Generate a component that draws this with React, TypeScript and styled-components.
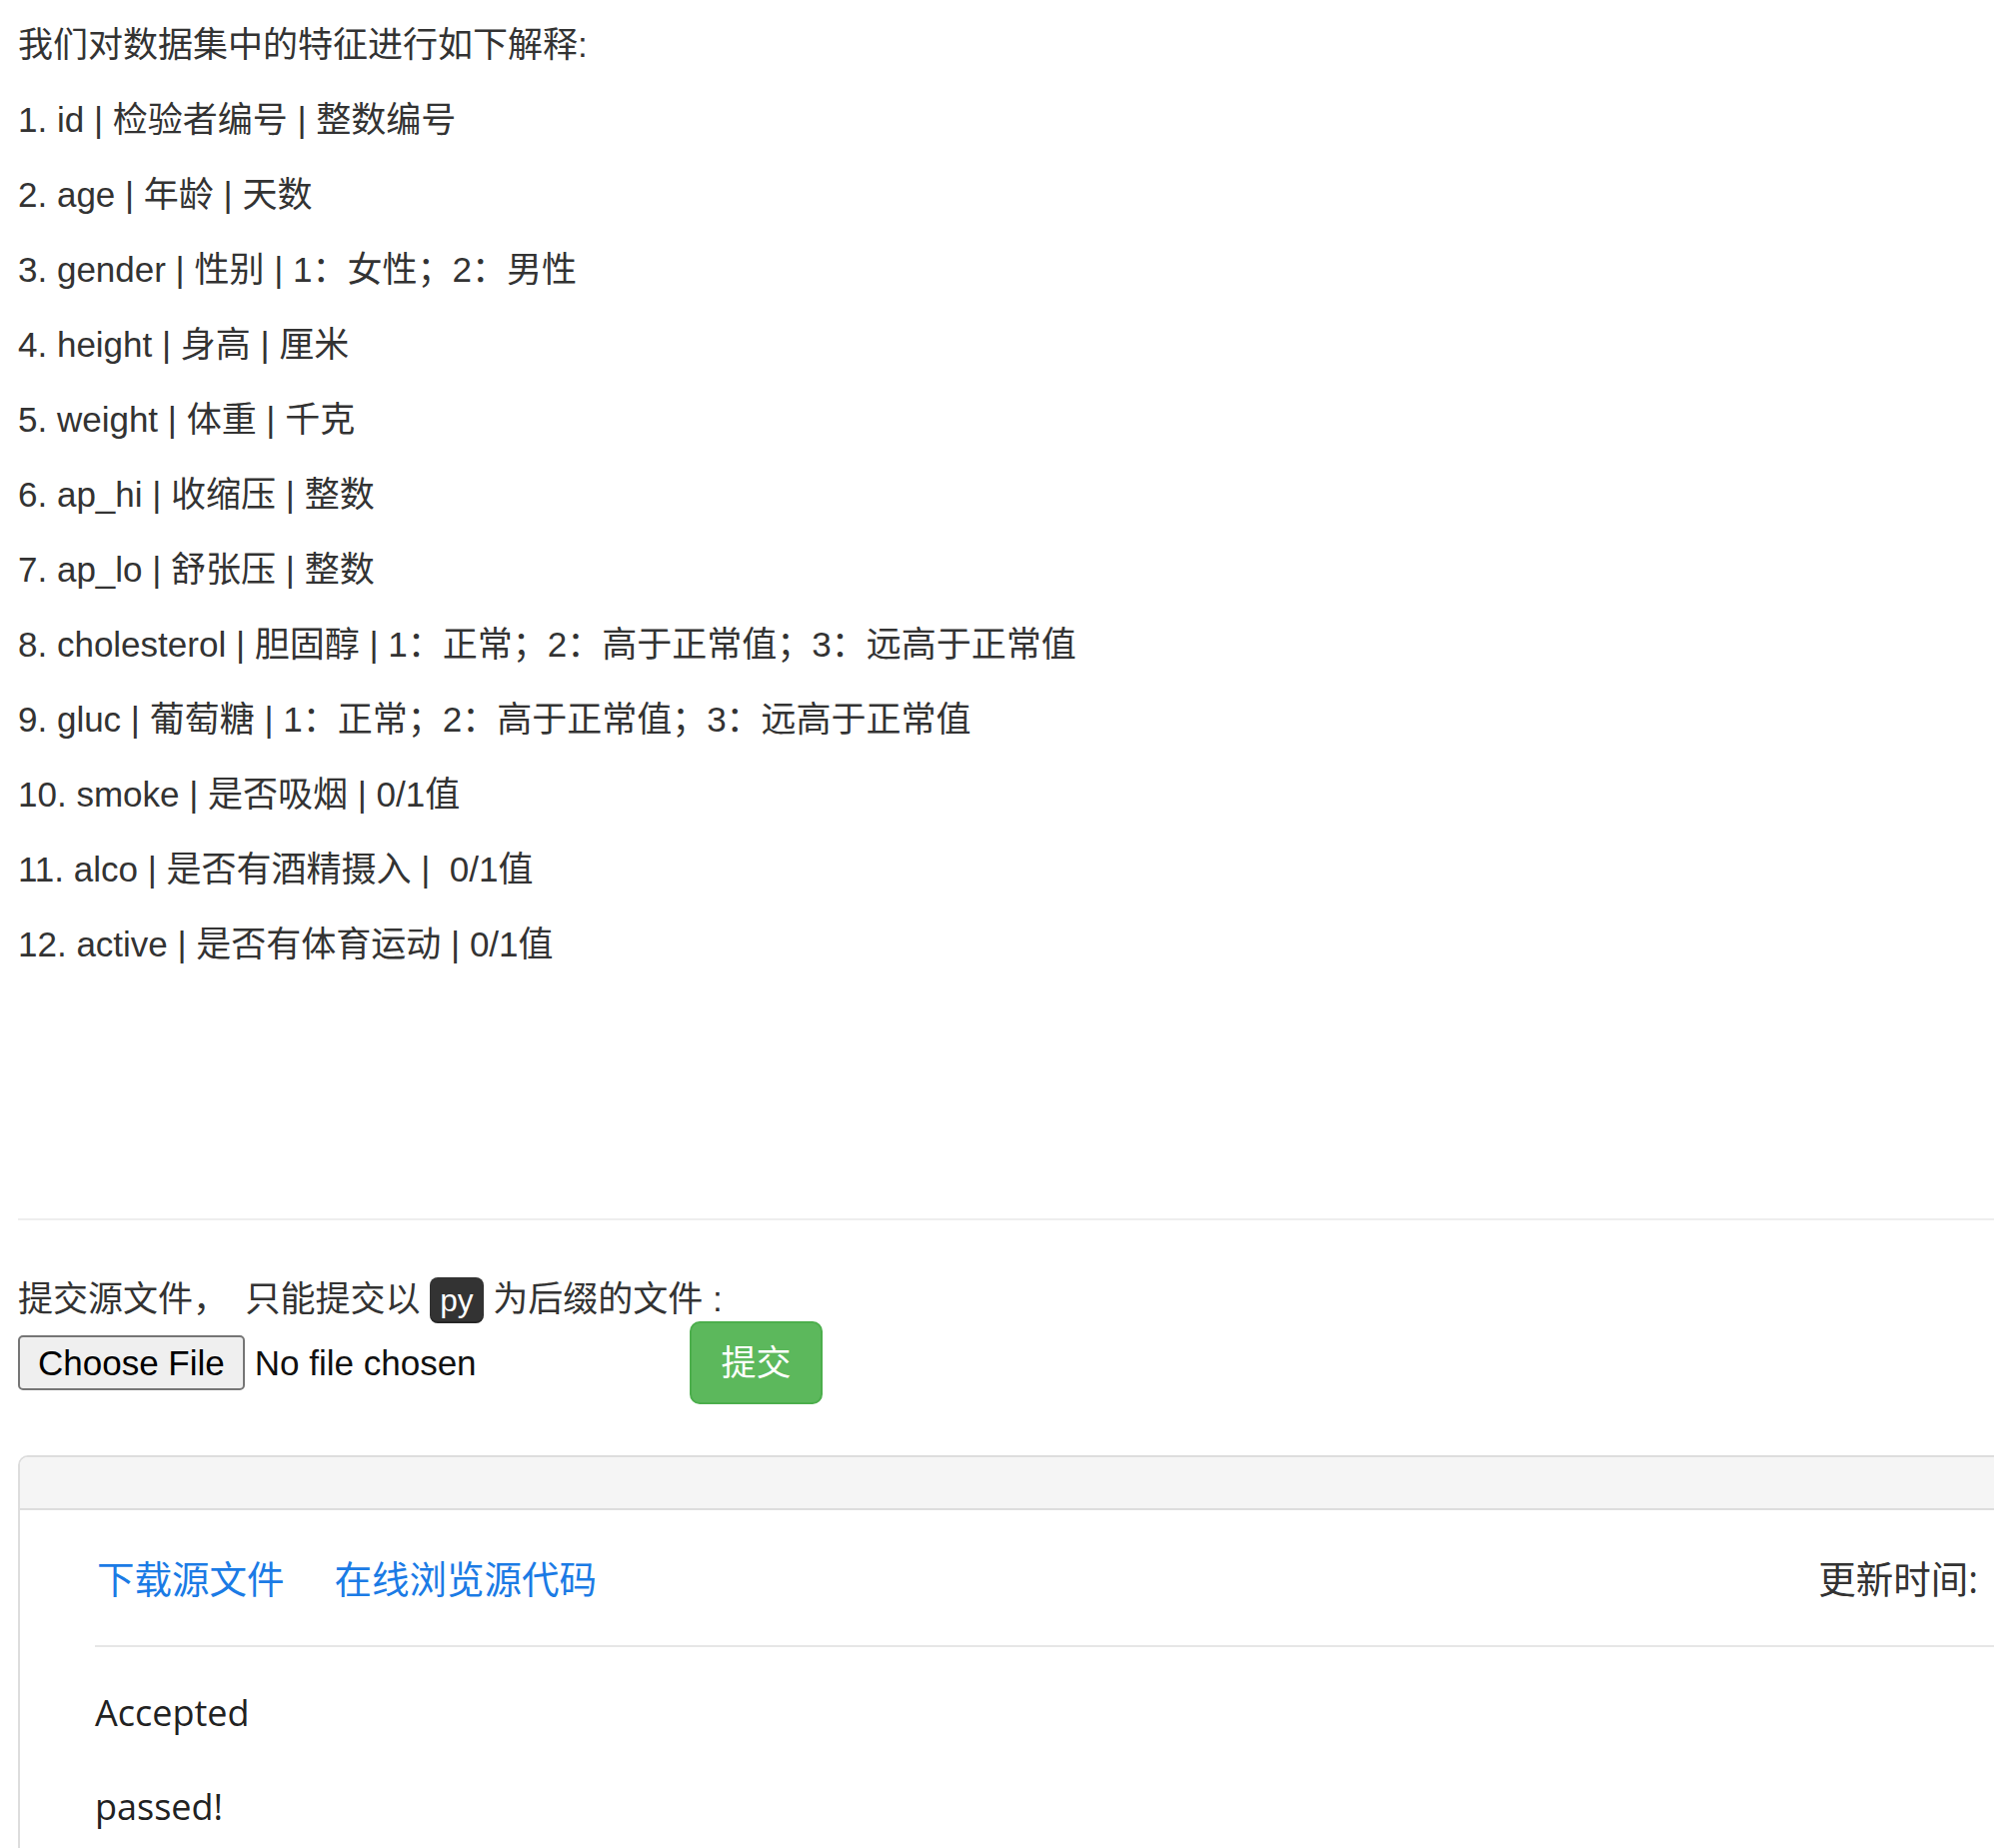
import React from "react"
import styled, { createGlobalStyle } from "styled-components"

const GlobalStyle = createGlobalStyle`
  html, body {
    margin: 0;
    padding: 0;
    background: #fff;
  }
  body {
    font-family: "Liberation Sans", "Noto Sans CJK SC", sans-serif;
    font-size: 35px;
    line-height: 50px;
    color: #333;
  }
  * {
    box-sizing: border-box;
  }
`

const features = [
  "1. id | 检验者编号 | 整数编号",
  "2. age | 年龄 | 天数",
  "3. gender | 性别 | 1：女性；2：男性",
  "4. height | 身高 | 厘米",
  "5. weight | 体重 | 千克",
  "6. ap_hi | 收缩压 | 整数",
  "7. ap_lo | 舒张压 | 整数",
  "8. cholesterol | 胆固醇 | 1：正常；2：高于正常值；3：远高于正常值",
  "9. gluc | 葡萄糖 | 1：正常；2：高于正常值；3：远高于正常值",
  "10. smoke | 是否吸烟 | 0/1值",
  "11. alco | 是否有酒精摄入 | \u00a00/1值",
  "12. active | 是否有体育运动 | 0/1值",
]

const Page = styled.div`
  width: 100vw;
  height: 100vh;
  overflow: hidden;
`

const Container = styled.div`
  width: max-content;
  padding: 20px 0 0 18px;
`

const Description = styled.section`
  padding-bottom: 174px;
`

const Paragraph = styled.p`
  margin: 0 0 25px;
`

const Divider = styled.hr`
  border: 0;
  border-top: 2.5px solid #eee;
  margin: 50px 0;
  width: 2050px;
`

const UploadLabel = styled.div`
  height: 50px;
  padding-top: 4px;
  margin: 0;
`

const Kbd = styled.kbd`
  font-family: "Liberation Sans", sans-serif;
  font-size: 31.5px;
  padding: 5px 10px;
  color: #fff;
  background: #333;
  border-radius: 8px;
  box-shadow: inset 0 -2px 0 rgba(0, 0, 0, 0.25);
`

const UploadRow = styled.form`
  display: flex;
  align-items: center;
  height: 85px;
  margin: 0;
`

const FileInput = styled.label`
  display: flex;
  align-items: center;
  width: 672px;
  font-family: "Liberation Sans", sans-serif;
  font-size: 35px;
  color: #111;
`

const FileButton = styled.span`
  display: inline-flex;
  align-items: center;
  height: 55px;
  padding: 0 18px;
  margin-right: 10px;
  border: 2px solid #767676;
  border-radius: 5px;
  background: #efefef;
  color: #000;
`

const SubmitButton = styled.button`
  font-family: "Liberation Sans", "Noto Sans CJK SC", sans-serif;
  font-size: 35px;
  line-height: 50px;
  padding: 14.5px 29.5px;
  color: #fff;
  background: #5cb85c;
  border: 2px solid #4cae4c;
  border-radius: 10px;
  cursor: pointer;
`

const Panel = styled.div`
  margin-top: 50px;
  width: 2080px;
  border: 2.5px solid #ddd;
  border-radius: 10px;
  background: #fff;
`

const PanelHeading = styled.div`
  height: 52.5px;
  background: #f5f5f5;
  border-bottom: 2.5px solid #ddd;
  border-radius: 8px 8px 0 0;
`

const PanelBody = styled.div`
  padding: 37.5px;
`

const ResultBlock = styled.div`
  padding: 0 37.5px 0 39.5px;
  font-family: "Open Sans", "Noto Sans CJK SC", sans-serif;
`

const LinkRow = styled.div`
  display: flex;
  align-items: center;
  padding: 4.5px 42px 0 0;
  font-size: 37.5px;
  line-height: 54px;
`

const SourceLink = styled.a`
  color: #1b7be5;
  text-decoration: none;
  margin-right: 50px;
`

const UpdateTime = styled.span`
  margin-left: auto;
  color: #333;
`

const InnerDivider = styled.hr`
  border: 0;
  border-top: 2px solid #e6e6e6;
  margin: 39.5px 0 39px -2px;
`

const ResultLine = styled.p`
  margin: 0 0 40px -2px;
  font-size: 36px;
  line-height: 54px;
  color: #222;
`

export default function App() {
  return (
    <Page>
      <GlobalStyle />
      <Container>
        <Description>
          <Paragraph>我们对数据集中的特征进行如下解释:</Paragraph>
          {features.map((f) => (
            <Paragraph key={f}>{f}</Paragraph>
          ))}
        </Description>

        <Divider />

        <UploadLabel>
          提交源文件，{"\u2002"}只能提交以 <Kbd>py</Kbd> 为后缀的文件 :
        </UploadLabel>
        <UploadRow onSubmit={(e) => e.preventDefault()}>
          <FileInput>
            <FileButton>Choose File</FileButton>
            No file chosen
          </FileInput>
          <SubmitButton type="submit">提交</SubmitButton>
        </UploadRow>

        <Panel>
          <PanelHeading />
          <PanelBody>
            <ResultBlock>
              <LinkRow>
                <SourceLink href="#">下载源文件</SourceLink>
                <SourceLink href="#">在线浏览源代码</SourceLink>
                <UpdateTime>更新时间:</UpdateTime>
              </LinkRow>
              <InnerDivider />
              <ResultLine>Accepted</ResultLine>
              <ResultLine>passed!</ResultLine>
            </ResultBlock>
          </PanelBody>
        </Panel>
      </Container>
    </Page>
  )
}
